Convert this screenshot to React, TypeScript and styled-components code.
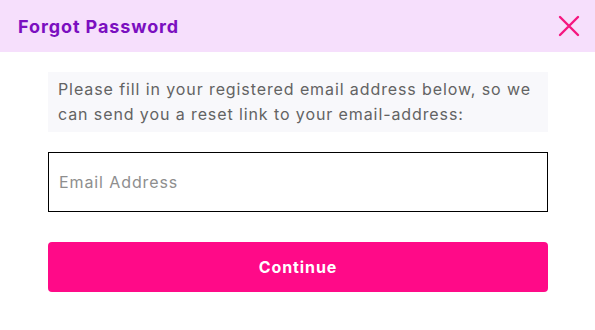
import React, { useState } from "react";
import styled, { createGlobalStyle } from "styled-components";

const GlobalStyle = createGlobalStyle`
  html, body {
    margin: 0;
    padding: 0;
    background: #ffffff;
    font-family: Inter, "Open Sans", sans-serif;
    letter-spacing: 0.9px;
  }
`;

const Modal = styled.div`
  width: 595px;
  height: 330px;
  background: #fff;
  display: flex;
  flex-direction: column;
`;

const Header = styled.div`
  height: 52px;
  background: #f6dffc;
  display: flex;
  align-items: center;
  justify-content: space-between;
  padding: 0 14px 0 18px;
`;

const Title = styled.h2`
  margin: 0;
  font-size: 18px;
  font-weight: 700;
  color: #7b0fc0;
  letter-spacing: 0.9px;
`;

const CloseButton = styled.button`
  border: none;
  background: none;
  padding: 0;
  width: 24px;
  height: 24px;
  display: flex;
  align-items: center;
  justify-content: center;
  cursor: pointer;
`;

const Body = styled.div`
  padding: 20px 47px 0 48px;
  display: flex;
  flex-direction: column;
`;

const Info = styled.p`
  margin: 0;
  background: #f8f8fb;
  padding: 5px 10px 5px 10px;
  font-size: 16px;
  line-height: 25px;
  color: #636363;
`;

const EmailInput = styled.input`
  margin-top: 20px;
  height: 60px;
  box-sizing: border-box;
  border: 1px solid #000;
  padding: 0 10px;
  font-family: inherit;
  font-size: 16px;
  letter-spacing: 0.9px;
  color: #222;
  outline: none;
  &::placeholder {
    color: #8e8e8e;
  }
`;

const SubmitButton = styled.button`
  margin-top: 30px;
  height: 50px;
  border: none;
  border-radius: 4px;
  background: #ff0a88;
  color: #fff;
  font-family: inherit;
  font-size: 16px;
  font-weight: 700;
  letter-spacing: 0.9px;
  cursor: pointer;
`;

export default function App() {
  const [email, setEmail] = useState("");
  return (
    <>
      <GlobalStyle />
      <Modal>
        <Header>
          <Title>Forgot Password</Title>
          <CloseButton aria-label="Close">
            <svg width="22" height="22" viewBox="0 0 22 22">
              <path d="M2 2 L20 20 M20 2 L2 20" stroke="#f5167f" strokeWidth="2.4" strokeLinecap="round" />
            </svg>
          </CloseButton>
        </Header>
        <Body>
          <Info>
            Please fill in your registered email address below, so we can send you a reset link to your
            email-address:
          </Info>
          <EmailInput
            placeholder="Email Address"
            value={email}
            onChange={(e) => setEmail(e.target.value)}
          />
          <SubmitButton>Continue</SubmitButton>
        </Body>
      </Modal>
    </>
  );
}
